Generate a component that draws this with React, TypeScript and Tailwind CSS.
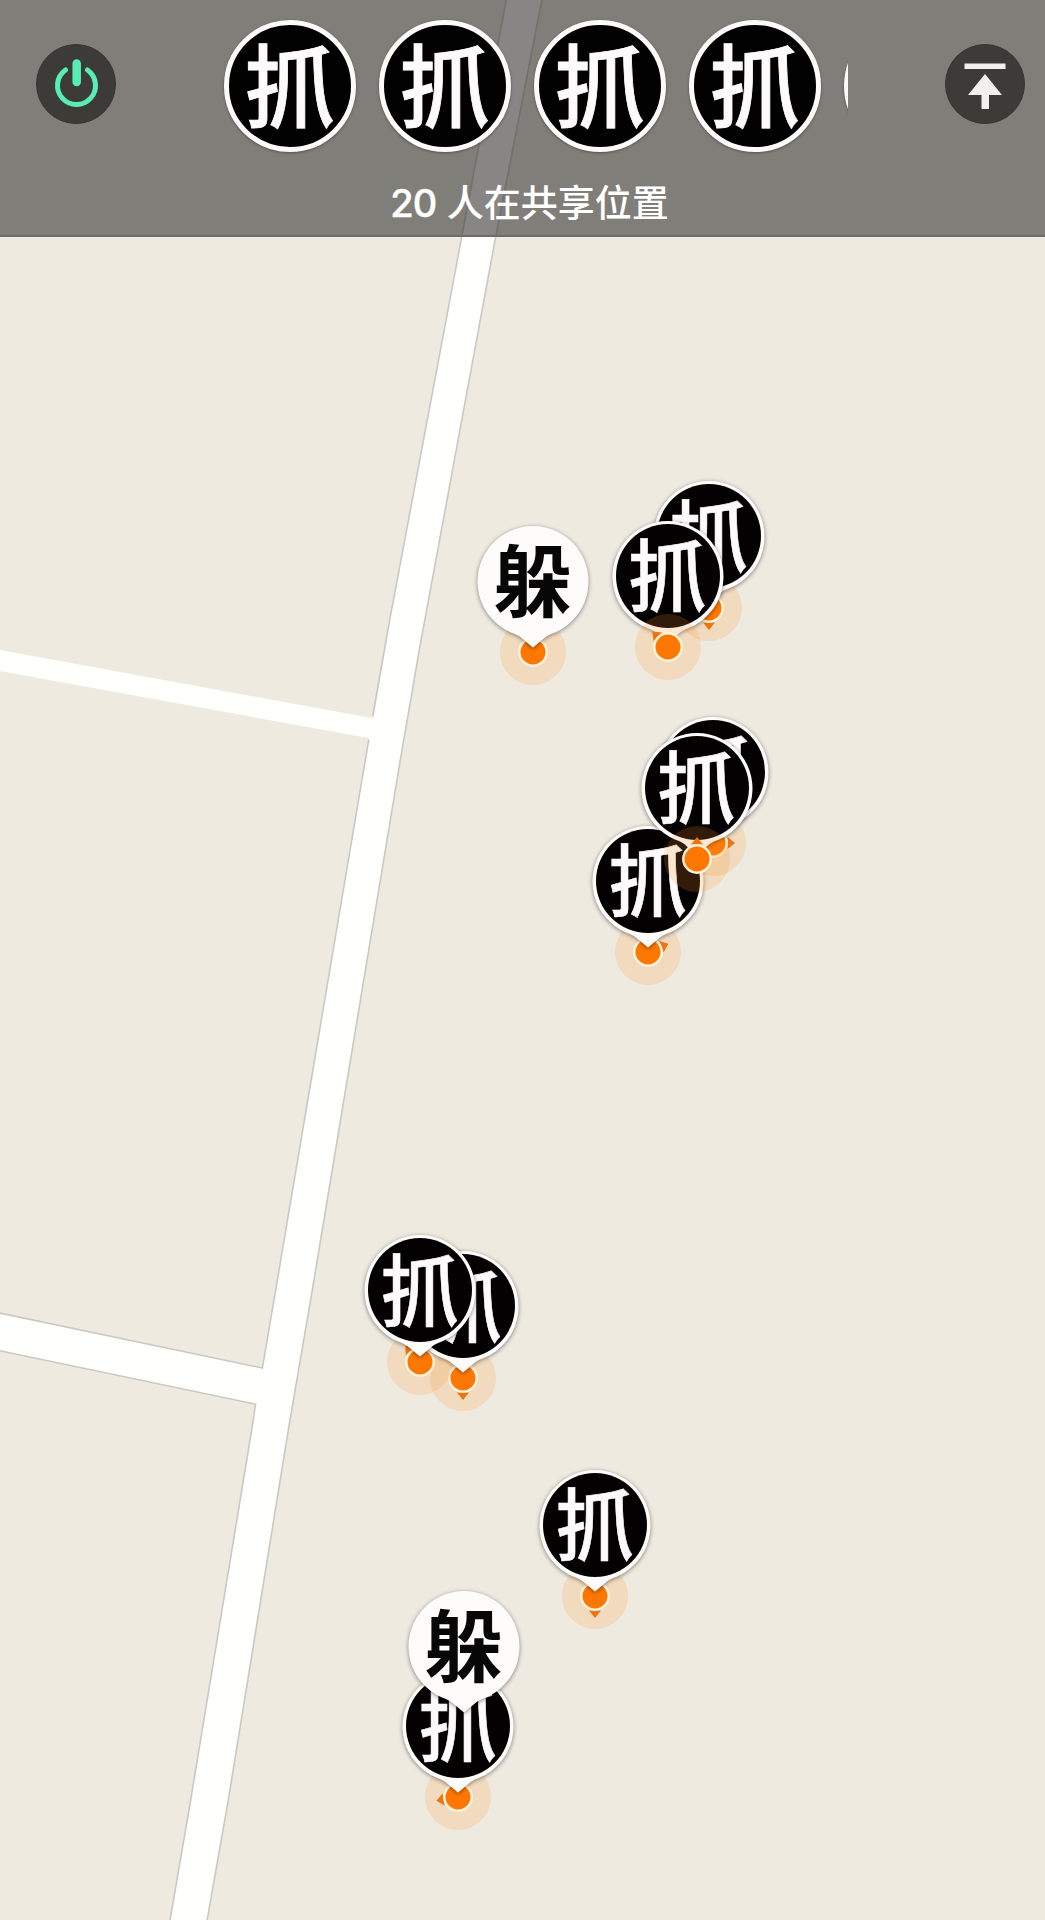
type Role = "catch" | "hide"

type Player = {
    id: number
    role: Role
    x: number // centre of the avatar on the map
    y: number
    heading?: number // degrees, 0 is up
    dotOnTop?: boolean
    noDot?: boolean
}

const players: Player[] = [
    { id: 1, role: "hide", x: 533, y: 580.5 },
    { id: 2, role: "catch", x: 709, y: 536, heading: 180 },
    { id: 3, role: "catch", x: 667.5, y: 575.5, heading: -45, dotOnTop: true },
    { id: 4, role: "catch", x: 713, y: 771.5, heading: 90 },
    { id: 5, role: "catch", x: 648, y: 880.5, heading: 68 },
    { id: 6, role: "catch", x: 696.5, y: 787.5, heading: 0, dotOnTop: true },
    { id: 7, role: "catch", x: 463, y: 1306, heading: 180 },
    { id: 8, role: "catch", x: 420, y: 1290, heading: -42 },
    { id: 9, role: "catch", x: 595, y: 1524.5, heading: 180 },
    { id: 10, role: "catch", x: 458, y: 1725.5, heading: -100 },
    { id: 11, role: "hide", x: 464, y: 1646, noDot: true },
]

const sharing = [1, 2, 3, 4, 5]

function Roads() {
    return <svg className="absolute inset-0" width="1045" height="1920" viewBox="0 0 1045 1920">
        <path d="M0 650 L374 718.5 V739 L0 671 Z" fill="#fffffe" />
        <path
            d="M507.500 -2 L462.700 236 L390.500 620 L373.500 716 M369.500 740 L276.500 1290 L263 1369 L-2 1313.500 V1349.500 L256.500 1403.500 L252.500 1430 L191.500 1800 L170.500 1922 H206 L227.500 1800 L287.500 1430 L311.500 1290 L399.500 760 L419 647 L495 236 L541.500 -2"
            fill="none" stroke="#cbc8c4" strokeWidth="3.200"
        />
        <path
            d="M507.500 -2 L462.700 236 L390.500 620 L373.500 717 L369.500 740 L276.500 1290 L263 1369 L-2 1313.500 V1349.500 L256.500 1403.500 L252.500 1430 L191.500 1800 L170.500 1922 H206 L227.500 1800 L287.500 1430 L311.500 1290 L399.500 760 L419 647 L495 236 L541.500 -2 Z"
            fill="#fffffe"
        />
    </svg>
}

function LocationDot({ player }: { player: Player }) {
    return <svg
        className="absolute size-[68px] -translate-x-1/2 -translate-y-1/2"
        style={{ left: player.x, top: player.y + 71.5 }}
        viewBox="-34 -34 68 68"
    >
        <circle r="33" fill="#ff9628" fillOpacity="0.19" />
        {player.heading !== undefined && <path d="M-6 -14.500 L0 -22 L6 -14.500 Z" fill="#ee7410" transform={`rotate(${player.heading})`} />}
        <circle r="13.700" fill="#fd7703" stroke="#fff3dc" strokeWidth="2.400" />
    </svg>
}

function Pin({ player }: { player: Player }) {
    const hide = player.role === "hide"
    return <div
        className="absolute flex size-[112px] -translate-x-1/2 -translate-y-1/2 items-center justify-center"
        style={{ left: player.x, top: player.y }}
    >
        <svg className="absolute inset-0 size-[112px] overflow-visible drop-shadow-[0_1px_2px_rgba(0,0,0,0.45)]" viewBox="-56 -56 112 112">
            <path d="M-22 51.500 A55.500 55.500 0 1 1 22 51.500 Q15 54 12 56.500 L0 66.500 L-12 56.500 Q-15 54 -22 51.500 Z" fill="#fefcfb" />
            {!hide && <circle r="52" fill="#030102" />}
        </svg>
        {hide
            ? <span className="relative -top-1 text-[78px] leading-none font-bold text-[#080707]">躲</span>
            : <span className="relative -top-1 text-[79px] leading-none font-medium text-[#fcfafa] [-webkit-text-stroke:0.6px_#fcfafa]">抓</span>}
    </div>
}

function Avatar() {
    return <div className="flex size-[132px] shrink-0 items-center justify-center rounded-full border-[5px] border-[#fcfbfa] bg-[#020101] shadow-[0_1px_3px_rgba(0,0,0,0.35)]">
        <span className="relative -top-[5px] text-[91px] leading-none font-medium text-[#fcfafa] [-webkit-text-stroke:0.8px_#fcfafa]">抓</span>
    </div>
}

function Header() {
    return <header className="relative flex h-[237px] flex-col border-b-2 border-[#716c69] bg-[#373632]/60">
        <div className="flex h-[168px] shrink-0 pr-5 pl-9">
            <button className="mt-11 size-20 rounded-full border border-[#35342f] bg-[#3c3b37]">
                <svg className="size-full" viewBox="0 0 78 78" fill="none" stroke="#58edb2" strokeLinecap="round">
                    <path d="M28.500 25 A19 19 0 1 0 50.500 25" strokeWidth="5" />
                    <path d="M39.700 18.500 V37" strokeWidth="8.500" />
                </svg>
            </button>
            <div className="ml-20 flex w-[652px] gap-[23px] overflow-hidden pt-5 pl-7">
                {sharing.map(id => <Avatar key={id} />)}
            </div>
            <button className="mt-11 ml-auto size-20 rounded-full border border-[#35342f] bg-[#3c3b37]">
                <svg className="size-full" viewBox="0 0 78 78" fill="#f1f0ec">
                    <path d="M18.500 18.500 H59.500 V24 H18.500 Z" />
                    <path d="M39 29 L56 50 H43 V64 H35.500 V50 H22 Z" />
                </svg>
            </button>
        </div>
        <p className="pl-[14px] text-center text-[37px] leading-[67px] font-medium text-white">
            <span className="mr-0.5 font-['Inter','Noto_Sans_CJK_SC',sans-serif] text-[38px] tracking-[-1px] [-webkit-text-stroke:0.4px_white]">20</span> 人在共享位置
        </p>
    </header>
}

export default function App() {
    const underneath = players.filter(p => !p.dotOnTop && !p.noDot)
    const onTop = players.filter(p => p.dotOnTop)

    return <div className="relative h-[1920px] w-[1045px] overflow-hidden bg-[#eeeae0] font-['Noto_Sans_CJK_SC',sans-serif]">
        <Roads />
        <Header />
        {underneath.map(p => <LocationDot key={p.id} player={p} />)}
        {players.map(p => <Pin key={p.id} player={p} />)}
        {onTop.map(p => <LocationDot key={p.id} player={p} />)}
    </div>
}
